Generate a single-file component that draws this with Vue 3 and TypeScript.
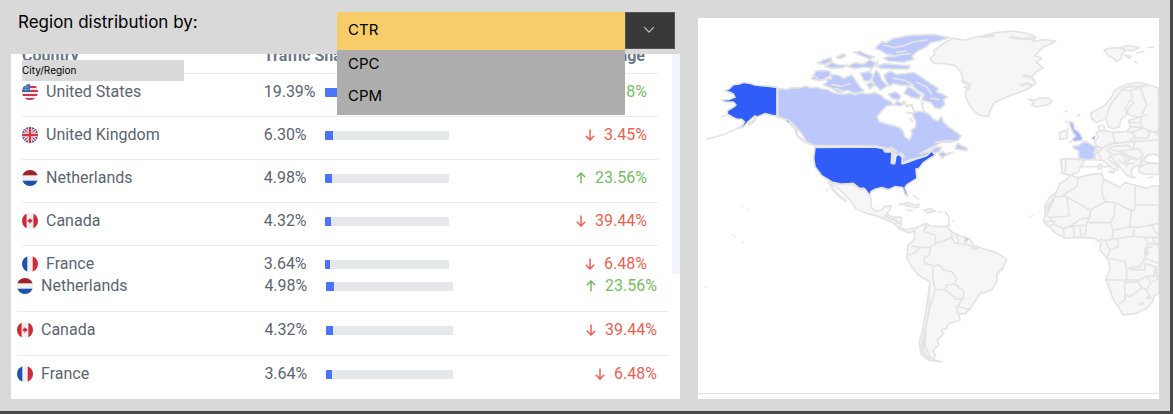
<script setup lang="ts">
import { ref } from 'vue'

interface Row {
  country: string
  flag: 'us' | 'gb' | 'nl' | 'ca' | 'fr'
  share: number
  change: number
}

const metric = ref('CTR')
const others = ['CPC', 'CPM']

const netherlands: Row = { country: 'Netherlands', flag: 'nl', share: 4.98, change: 23.56 }
const canada: Row = { country: 'Canada', flag: 'ca', share: 4.32, change: -39.44 }
const france: Row = { country: 'France', flag: 'fr', share: 3.64, change: -6.48 }

const tables: { id: string; head: boolean; rows: Row[] }[] = [
  {
    id: 'main',
    head: true,
    rows: [
      { country: 'United States', flag: 'us', share: 19.39, change: 3.18 },
      { country: 'United Kingdom', flag: 'gb', share: 6.3, change: -3.45 },
      netherlands,
      canada,
      france,
    ],
  },
  { id: 'more', head: false, rows: [netherlands, canada, france] },
]

const percent = (n: number) => Math.abs(n).toFixed(2) + '%'
</script>

<template>
  <main class="page">
    <section class="left">
      <header class="bar">
        <label class="title" for="metric">Region distribution by:</label>
        <div class="dropdown">
          <select id="metric" v-model="metric" class="current">
            <option>CTR</option>
            <option v-for="o in others" :key="o">{{ o }}</option>
          </select>
          <button class="toggle" type="button" aria-label="Toggle metric list">
            <svg width="12" height="8" viewBox="0 0 12 8"><path d="M1.2 1.2 6 6.2l4.800-5" /></svg>
          </button>
          <ul class="menu">
            <li v-for="o in others" :key="o">
              <button type="button" @click="metric = o">{{ o }}</button>
            </li>
          </ul>
        </div>
      </header>

      <div class="panel">
        <span class="tag">City/Region</span>
        <div v-for="t in tables" :key="t.id" :class="['block', t.id]">
          <table>
            <colgroup>
              <col class="c-name" /><col class="c-share" /><col /><col class="c-change" />
            </colgroup>
            <thead v-if="t.head">
              <tr>
                <th>Country</th>
                <th colspan="2">Traffic Share</th>
                <th class="end">Change</th>
              </tr>
            </thead>
            <tbody>
              <tr v-for="r in t.rows" :key="r.country">
                <td>
                  <span class="name">
                    <svg class="flag" viewBox="0 0 16 16" aria-hidden="true">
                      <g clip-path="url(#disc)">
                        <rect width="16" height="16" fill="#f0f0f0" />
                        <template v-if="r.flag === 'us'">
                          <path d="M0 3h16M0 7h16M0 11h16M0 15h16" stroke="#d03446" stroke-width="2" />
                          <rect width="8" height="8" fill="#3a66b0" />
                          <path d="M1.500 3h6M1 5.500h6.500M4 1v6" stroke="#9db4dc" stroke-width=".6" />
                        </template>
                        <template v-else-if="r.flag === 'gb'">
                          <rect width="16" height="16" fill="#2453a6" />
                          <path d="M1 1l14 14M15 1L1 15" stroke="#f0f0f0" stroke-width="3.400" />
                          <path d="M1 1l14 14M15 1L1 15" stroke="#d03446" stroke-width="1.200" />
                          <path d="M8 0v16M0 8h16" stroke="#f0f0f0" stroke-width="4.600" />
                          <path d="M8 0v16M0 8h16" stroke="#d03446" stroke-width="2.400" />
                        </template>
                        <template v-else-if="r.flag === 'nl'">
                          <rect width="16" height="5.300" fill="#a2202c" />
                          <rect y="10.700" width="16" height="5.300" fill="#1f52b0" />
                        </template>
                        <template v-else-if="r.flag === 'ca'">
                          <path d="M0 0h4.600v16H0zM11.400 0H16v16h-4.600z" fill="#ce2a36" />
                          <path d="M8 5l.8 1.600.8-.3-.1 1 1.200.2-.7 1.400-1.500.7H8.300V11h-.6V9.600H7.500L6 8.900l-.7-1.400 1.200-.2-.1-1 .8.3z" fill="#ce2a36" />
                        </template>
                        <template v-else>
                          <path d="M0 0h5.300v16H0z" fill="#1f52b0" />
                          <path d="M10.700 0H16v16h-5.300z" fill="#d02a36" />
                        </template>
                      </g>
                    </svg>
                    {{ r.country }}
                  </span>
                </td>
                <td>{{ percent(r.share) }}</td>
                <td>
                  <span class="track"><span class="fill" :style="{ width: `calc(${r.share}% + 1px)` }"></span></span>
                </td>
                <td>
                  <span :class="['change', r.change > 0 ? 'up' : 'down']">
                    <svg width="10" height="12" viewBox="0 0 10 12" aria-hidden="true">
                      <path v-if="r.change > 0" d="M5 11.500V1M.8 5.200 5 1l4.200 4.200" />
                      <path v-else d="M5 .5V11M.8 6.800 5 11l4.200-4.200" />
                    </svg>
                    {{ percent(r.change) }}
                  </span>
                </td>
              </tr>
            </tbody>
          </table>
        </div>
      </div>
    </section>

    <section class="map-card">
      <svg class="map" viewBox="698 18 461 375" role="img" aria-label="Traffic by country">
        <defs>
          <clipPath id="disc"><circle cx="8" cy="8" r="8" /></clipPath>
        </defs>

        <!-- Alaska -->
        <g transform="translate(690 10) scale(.33333)">
          <path class="line" d="M160 345 140 357 118 366 100 374 75 381 52 386" />
          <path class="line wide" d="M262 320 285 326 305 345 318 358 322 378 345 396 375 406M178 343l12-8 8-12" />
          <path class="line" d="M95 320l14-4" />
          <path class="edge us" d="M261 232 240 229 215 227 195 225 180 220 162 217 148 222 130 224 118 236 103 243 120 247 130 252 135 262 118 268 95 270 105 276 130 276 138 285 130 291 112 302 112 312 125 320 140 328 155 328 163 335 158 345 142 355 160 351 175 335 195 318 202 321 225 311 245 316 261 318Z" />
          <path class="us" d="M292 331l5-6 7 6-3 4h-8z" />
        </g>

        <!-- Canada and the contiguous United States -->
        <g transform="translate(760 25) scale(.33333)">
          <path class="edge ca" d="M53 190 80 193 100 187 120 189 138 182 150 188 170 187 185 192 205 194 220 203 250 208 270 204 285 210 300 203 325 207 345 203 362 210 375 222 390 228 402 240 410 228 425 235 432 228 440 242 456 240 462 262 480 258 495 262 510 270 520 282 532 288 545 275 550 290 565 305 585 318 603 332 595 345 570 352 545 352 525 362 505 372 480 386 505 380 528 366 545 366 540 378 520 386 500 392 455 404 430 416 422 396 405 386 388 374 370 368 345 363 165 362 140 352 125 325 100 298 85 285 53 275Z" />
          <path class="edge sea" d="M402 240 380 243 365 258 351 275 358 290 380 297 400 302 420 308 430 320 434 335 448 345 456 330 453 315 466 308 468 290 458 272 462 258 452 240 440 245 435 232 425 243Z" />
          <path class="edge ca" d="M345 70 365 50 380 52 400 40 450 31 520 28 568 38 545 46 510 54 500 65 480 75 465 85 456 95 462 103 430 112 385 108 370 100 400 90 380 88 365 78Z" />
          <path class="edge ca" d="M372 150 390 138 410 148 435 146 460 142 475 150 490 160 515 178 535 190 530 200 548 208 562 216 550 225 555 238 540 252 525 248 512 232 485 225 492 208 470 195 455 180 425 182 400 175 390 184 378 168Z" />
          <path class="edge ca" d="M155 162 168 138 185 136 208 138 214 147 205 156 190 164 170 166Z" />
          <path class="edge ca" d="M190 180 202 170 195 160 215 162 210 148 235 150 250 160 275 150 288 168 300 185 312 198 285 205 260 196 235 203 215 190Z" />
          <path class="edge ca" d="M172 115 190 105 212 98 216 108 195 118ZM195 125 215 112 235 120 262 120 250 128 215 130ZM230 97 250 86 258 92 240 101ZM282 82 300 78 315 86 343 96 330 102 300 91ZM262 124 285 113 310 117 330 103 352 117 335 130 310 126 285 131Z" />
          <path class="edge ca" d="M302 145 325 139 340 150 330 168 312 168ZM347 136 358 145 365 165 382 182 362 196 345 180 335 165ZM350 124 372 116 420 120 450 122 445 132 400 132 360 130ZM320 178l14-6 8 8-12 12ZM385 208l20-8 18 12-6 12-20-3ZM432 205l12-22 18 12 22 16-8 10-22-4Z" />
          <path class="edge ca" d="M585 372 592 355 605 362 620 368 622 377 602 374ZM536 386 548 380 560 386 578 381 562 390 545 399ZM525 352l20-2 20-4 18 2" />
          <path class="line" d="M354 108l-8 12M372 60l30 8 30-6M395 96l30-8 26-2M440 262l18 4M450 280l8 10M486 240l6-8M492 262l-8-30" />
          <path class="line" d="M215 178l30 6 24-8M400 160l34 6 26 14M470 172l30 14 14 20M330 140l14-20M225 190l20 6M160 152l14 8M500 45l-40 6-30 12M440 78l-30 4M512 220l24 4" />
          <path class="edge us" d="M165 367 345 366 370 371 375 381 396 380 394 415 404 416 408 392 418 388 427 398 426 416 450 409 475 400 500 392 515 378 526 390 505 403 490 413 478 430 468 432 471 460 440 480 435 488 444 514 436 510 428 488 405 485 385 494 365 488 345 493 333 500 330 511 320 502 312 490 298 490 280 475 245 478 215 471 205 464 185 452 165 425 161 400Z" />
          <path class="line wide" d="M374 376l20-8 14 12M400 388v26M422 384l10 12M430 414l22-8" />
        </g>

        <!-- Greenland, Iceland, northern Europe -->
        <g transform="translate(930 15) scale(.33333)">
          <path class="edge" d="M0 130 15 118 10 108 40 85 70 70 105 75 130 68 160 62 200 53 250 48 290 55 318 66 308 80 340 74 378 78 365 86 340 95 325 110 315 122 335 130 318 142 340 158 320 170 305 185 318 205 300 218 270 232 245 240 215 253 195 262 183 280 175 305 145 300 125 280 108 250 105 232 120 215 100 197 95 175 75 152 45 146 10 145Z" />
          <path class="line wide" d="M282 182l22 4 6 8M272 210l20-4 12 4M98 200l22 8M104 216l14 4M155 66l35-4M240 66l40 6 28-2" />
          <path class="edge" d="M296 252 312 256 330 249 355 249 367 260 350 270 320 276 305 270 312 263ZM522 105 545 99 570 98 585 108 575 118 574 130 560 140 550 130 535 122ZM570 98 595 91 628 98 605 108 588 104ZM585 120l18 4-6 7ZM614 140l6 3M655 98l16-2M620 114l20-4M406 288l5 2M442 304l6-4" />
          <path class="edge" d="M482 295 500 285 525 270 545 245 555 225 590 208 625 202 655 209 686 220V450H393L395 434 430 436 447 433 495 430 500 395 494 380 505 365 498 352 520 346 548 352 590 350 600 335 595 316 632 306 605 303 593 295 594 280 612 262 600 256 586 280 590 300 575 310 568 335 550 341 535 335 528 312 500 322 485 312Z" />
          <path class="edge sea" d="M393 433h90l45 5 30 17H393z" />
          <path class="line" d="M528 312 533 290 545 265 560 245 575 225 602 228 608 250M575 222 600 214 628 215 655 212M602 228 630 215 640 242 650 270 636 298M632 306 650 300M632 306 635 338 655 345 686 358M600 335 635 338M597 322 634 324M590 350 608 352 640 338 660 352 650 370 618 368 606 370 600 388 555 382 548 352M555 382 548 385 520 400 498 394M655 350 686 350M505 335l16-5 3 16-16-2zM606 352l10 16M532 396l40 4 25-8M500 414l30-8 50 4" />
          <path class="edge gb" d="M417 318 430 324 434 342 448 352 458 370 455 377 433 379 426 374 437 363 428 352 422 338Z" />
          <path class="edge" d="M388 354 405 346 413 353 411 370 390 374Z" />
          <path class="line" d="M412 324l-6-6M414 340l-4 12M424 382l-6-2" />
          <path class="edge fr" d="M430 392 446 392 452 386 467 378 482 388 500 398 492 412 496 430 478 435 447 431 445 408 430 400Z" />
          <path class="gb" d="M485 369 496 361 493 376Z" />
        </g>

        <!-- Southern Europe and Africa -->
        <g transform="translate(1030 80) scale(.33333)">
          <path class="edge" d="M205 212 228 198 250 190 300 185 387 180V225L360 222 345 232 332 240 334 256 312 260 303 272 306 290 290 286 275 268 258 248 240 226 235 238 262 258 264 270 248 266 225 245 210 235Z" />
          <path class="line" d="M235 205 265 215 295 210 325 205 340 225 325 238 300 230 270 215M228 210 250 225 270 222 295 236 325 238M265 240l20 12 28-2M285 240l5 20M245 200l50-4 10 10M300 232l-8 20M315 180l-5 24" />
          <path class="edge sea" d="M340 242 352 226 372 222 387 228V250L355 248Z" />
          <path class="edge" d="M326 263 350 252 387 250V284L345 282 328 276ZM92 238 130 236 165 243 152 258 146 275 120 286 95 280 96 255ZM205 254h9v13h-9ZM235 275l20-2-5 7ZM300 292h18ZM354 294l14-3Z" />
          <path class="line" d="M108 242 105 280" />
          <path class="edge" d="M45 375 60 350 80 335 90 310 110 298 122 285 145 293 180 284 215 280 222 298 245 310 270 322 285 308 315 315 350 325 365 318 387 318V640L372 648 368 665 350 685 320 700 280 705 268 685 250 660 240 630 228 600 240 565 235 540 210 510 212 487 195 475 150 472 105 475 75 458 55 438 40 425 45 405Z" />
          <path class="line" d="M145 293 140 320 100 345 180 390 225 365 255 368 305 392M60 350H110L118 408 60 412 46 405M80 335 60 372 48 380M78 345 54 398M222 298 215 320 218 345 225 365M315 315V375H387M315 375 312 392 305 392 300 425 302 440M255 368 252 410 240 428 170 428 180 412V390M180 412 150 418 130 432 118 440 100 445 75 435 60 412M118 440 130 440 134 472M150 440 154 472M100 445 104 474M170 428 165 467M130 438 162 436M240 428 250 450 246 478 225 482 212 478M250 450 302 440 322 442 345 438 387 430M246 478 262 476 310 468 345 472 387 472M310 468 312 448M262 476 265 500 240 510 232 530M225 482 240 510M345 472 355 490 345 510 345 535 330 560 290 565 285 545 262 540 240 535M290 565V600H228M290 600 330 600 350 588 370 590M300 568 345 570 345 550 375 560 370 590M285 602V660L268 672M285 608 325 605 335 625 300 650 285 645M350 588 362 610 350 630 335 622M350 630 362 655M345 535 387 550M355 490 387 495M345 505 366 500M378 560l6 35-14 10M368 475l4 12 15 4M365 435l10 20 12 10M46 425l30-2M54 438l20-5" />
          <path class="line wide" d="M330 673l8-3M350 654l8-2M350 510l2 12M360 433l4 4M376 575l4 14M58 375l-6 22" />
        </g>

        <!-- Latin America -->
        <g transform="translate(800 140) scale(.33333)">
          <path class="edge" d="M85 126 120 134 150 132 170 140 185 150 195 148 208 166 214 180 212 200 225 213 245 210 252 200 274 197 268 212 260 222 275 230 304 232 304 252 298 262 320 270 338 264 345 274 325 278 300 268 282 250 255 238 230 228 200 220 168 207 155 185 135 165 118 148Z" />
          <path class="line wide" d="M88 128 100 150 118 168 136 182M282 238l16 10M258 228l10 6" />
          <path class="line" d="M250 232 264 222M270 240 288 232M282 250 303 250" />
          <path class="edge" d="M298 193 325 187 356 201 345 204 322 195ZM372 210 392 206 406 214 382 218Z" />
          <path class="line" d="M322 210l14 2M414 216h12M340 166l16 12M352 192l6 4M436 216l8 10 4 14-2 12M458 244h3M440 258l8-2M80 150l3 2M308 192l20 8" />
          <path class="edge" d="M345 265 360 258 378 250 390 258 440 260 455 275 480 288 510 298 520 316 555 328 590 338 620 358 608 385 592 400 590 425 575 450 540 460 528 480 510 505 495 522 476 520 480 540 445 552 440 565 424 570 430 583 412 600 416 615 400 630 405 645 400 658 425 666 385 660 362 640 358 605 370 560 380 500 390 425 355 405 335 380 320 355 322 335 325 315 342 300Z" />
          <path class="line" d="M378 252 372 275 405 285 408 310 390 322 388 345 370 355 375 370 400 377 398 415 406 450 390 500 378 560 376 620 392 655M325 345 342 340 360 322 335 318M360 322 390 322M408 310 435 302 455 290 455 275M455 290 462 308 520 318M470 285 475 305M495 290V308M400 377 420 375 430 390 455 395 470 415 465 432 440 435 436 448 406 450M436 448 470 478 490 475 492 455 465 432M490 475 470 502 472 520M472 498 510 510M388 440 388 500 372 590 370 640" />
          <path class="line wide" d="M374 570l-8 50 4 20 16 14M378 258v6M516 324l14 2" />
          <path class="ca" d="M498 292l7 5-5 8-3-3z" />
        </g>

        <path class="line" d="M705 287l2 1M732 235l4 2M742 242l2 1M741 206l2 1M747 209l2 2M1030 217l3-2M1094 246h1" />
      </svg>
    </section>
  </main>
</template>

<style>
body {
  margin: 0;
}
</style>

<style scoped>
.page {
  box-sizing: border-box;
  min-height: 100vh;
  display: grid;
  grid-template-columns: 669fr 461fr;
  column-gap: 18px;
  align-items: start;
  padding: 0 11px 12px;
  background: #d9d9d9;
  border-right: 3px solid #4a4a4a;
  border-bottom: 3px solid #4a4a4a;
  font-family: Inter, "Liberation Sans", sans-serif;
  color: #000;
}
.bar {
  display: flex;
  justify-content: space-between;
  align-items: flex-start;
  padding: 12px 5px 4px 7px;
}
.title {
  font-size: 17px;
  line-height: 20px;
}
.dropdown {
  position: relative;
  z-index: 2;
  display: flex;
  align-items: flex-start;
  width: 338px;
}
.current {
  appearance: none;
  flex: 1;
  height: 38px;
  margin: 0;
  padding: 0 11px 2px;
  border: 0;
  border-radius: 0;
  background: #f7cd69;
  color: #000;
  font: 15px/20px Inter, "Liberation Sans", sans-serif;
}
.toggle {
  display: flex;
  align-items: center;
  justify-content: center;
  width: 50px;
  height: 37px;
  padding: 0 2px 2px 0;
  border: 1px solid #555;
  background: #383838;
}
.toggle svg {
  fill: none;
  stroke: #c4c4c4;
  stroke-width: 1.2;
}
.menu {
  position: absolute;
  top: 38px;
  left: 0;
  right: 50px;
  margin: 0;
  padding: 0 0 1px;
  list-style: none;
  background: #adadad;
}
.menu button {
  display: block;
  width: 100%;
  height: 32px;
  padding: 0 11px 4px;
  border: 0;
  background: none;
  color: #000;
  font: 15px/20px Inter, "Liberation Sans", sans-serif;
  text-align: left;
}
.panel {
  position: relative;
  overflow: hidden;
  background: #fff;
  color: #5a6572;
  font-family: Roboto, "Liberation Sans", sans-serif;
}
.tag {
  position: absolute;
  z-index: 1;
  top: 6px;
  left: 11px;
  box-sizing: border-box;
  width: 162px;
  height: 21px;
  background: #d9d9d9;
  color: #000;
  font: 10px/21px Inter, "Liberation Sans", sans-serif;
}
.block {
  font-size: 16px;
  line-height: 20px;
}
.main {
  padding: 0 14px 0 11px;
  border-right: 8px solid #f2f6fb;
}
.main table {
  margin-top: -8px;
}
.more {
  padding: 0 12px 0 6px;
}
table {
  width: 100%;
  table-layout: fixed;
  border-spacing: 0;
}
.c-name {
  width: 38%;
}
.c-share {
  width: 61px;
}
.more .c-share {
  width: 62px;
}
.c-change {
  width: 110px;
}
th {
  padding: 0 0 7px;
  border-bottom: 1px solid #ebecee;
  font-weight: 700;
  text-align: left;
  color: #6b7888;
}
th.end {
  padding-right: 13px;
  text-align: right;
}
td {
  padding: 8px 0 14px;
  border-bottom: 1px solid #ebecee;
}
.more td {
  padding-bottom: 15px;
}
.more tr:first-child td {
  padding-top: 2px;
}
tr:last-child td {
  border-bottom: 0;
}
.main tr:last-child td {
  padding-bottom: 0;
}
.main thead tr th {
  border-bottom: 1px solid #ebecee;
}
.name {
  display: flex;
  align-items: center;
  gap: 8px;
}
.flag {
  width: 16px;
  height: 16px;
}
.track {
  display: block;
  width: 124px;
  height: 9px;
  border-radius: 1px;
  overflow: hidden;
  background: #e5e8eb;
}
.more .track {
  width: 127px;
}
.fill {
  display: block;
  height: 9px;
  background: #4a74f9;
}
.change {
  display: flex;
  align-items: center;
  justify-content: flex-end;
  gap: 9px;
  padding-right: 11px;
}
.change svg {
  fill: none;
  stroke: currentColor;
  stroke-width: 1.5;
}
.up {
  color: #74bd5e;
}
.down {
  color: #ee5f50;
}
.map-card {
  margin-top: 18px;
  padding-bottom: 5px;
  background: #fff;
}
.map {
  display: block;
  width: 100%;
  border-bottom: 1px solid #e2e2e2;
  fill: #f6f6f6;
  stroke-linejoin: round;
  stroke-linecap: round;
}
.edge {
  stroke: #e4e4e4;
  stroke-width: 5px;
}
.line {
  fill: none;
  stroke: #e4e4e4;
  stroke-width: 5px;
}
.wide {
  stroke-width: 8px;
}
.map > .line {
  stroke-width: 1px;
}
.sea {
  fill: #fff;
}
.us {
  fill: #305df7;
}
.ca {
  fill: #bcc8fb;
}
.gb {
  fill: #a6b8fb;
}
.fr {
  fill: #bfccfb;
}
</style>
